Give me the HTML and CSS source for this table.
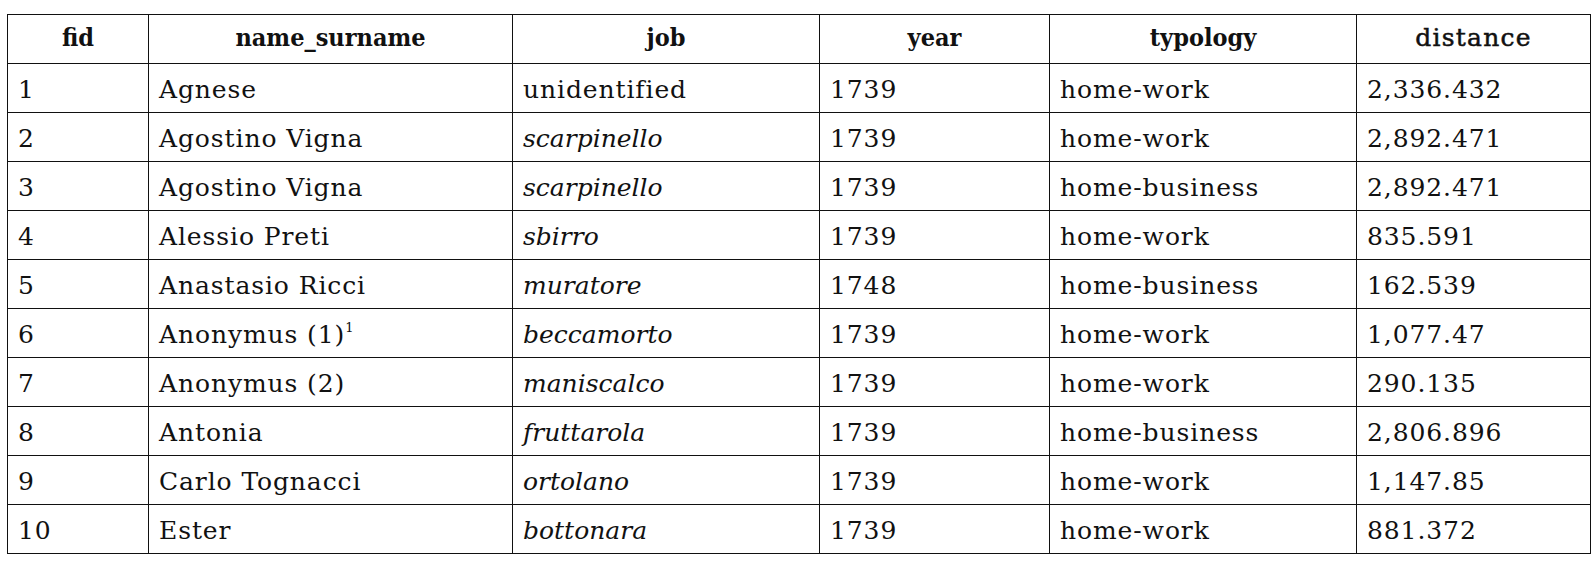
FILE: index.html
```html
<!DOCTYPE html>
<html>
<head>
<meta charset="utf-8">
<link rel="stylesheet" href="styles.css">
</head>
<body>
<table class="data">
  <colgroup>
    <col class="c-fid"><col class="c-name"><col class="c-job"><col class="c-year"><col class="c-typ"><col class="c-dist">
  </colgroup>
  <thead>
    <tr><th>fid</th><th>name_surname</th><th>job</th><th>year</th><th>typology</th><th class="light">distance</th></tr>
  </thead>
  <tbody>
    <tr><td>1</td><td>Agnese</td><td>unidentified</td><td>1739</td><td>home-work</td><td>2,336.432</td></tr>
    <tr><td>2</td><td>Agostino Vigna</td><td><em>scarpinello</em></td><td>1739</td><td>home-work</td><td>2,892.471</td></tr>
    <tr><td>3</td><td>Agostino Vigna</td><td><em>scarpinello</em></td><td>1739</td><td>home-business</td><td>2,892.471</td></tr>
    <tr><td>4</td><td>Alessio Preti</td><td><em>sbirro</em></td><td>1739</td><td>home-work</td><td>835.591</td></tr>
    <tr><td>5</td><td>Anastasio Ricci</td><td><em>muratore</em></td><td>1748</td><td>home-business</td><td>162.539</td></tr>
    <tr><td>6</td><td>Anonymus (1)<sup>1</sup></td><td><em>beccamorto</em></td><td>1739</td><td>home-work</td><td>1,077.47</td></tr>
    <tr><td>7</td><td>Anonymus (2)</td><td><em>maniscalco</em></td><td>1739</td><td>home-work</td><td>290.135</td></tr>
    <tr><td>8</td><td>Antonia</td><td><em>fruttarola</em></td><td>1739</td><td>home-business</td><td>2,806.896</td></tr>
    <tr><td>9</td><td>Carlo Tognacci</td><td><em>ortolano</em></td><td>1739</td><td>home-work</td><td>1,147.85</td></tr>
    <tr><td>10</td><td>Ester</td><td><em>bottonara</em></td><td>1739</td><td>home-work</td><td>881.372</td></tr>
  </tbody>
</table>
</body>
</html>
```

FILE: styles.css
```css
html, body {
  margin: 0;
  padding: 0;
  background: #ffffff;
}
body {
  padding: 14px 0 0 7px;
  font-family: "DejaVu Serif", "Liberation Serif", serif;
  color: #111111;
}
.data {
  border-collapse: collapse;
  table-layout: fixed;
  width: 1583px;
  font-size: 25px;
  letter-spacing: 0.9px;
}
.c-fid { width: 141px; }
.c-name { width: 364px; }
.c-job { width: 307px; }
.c-year { width: 230px; }
.c-typ { width: 307px; }
.c-dist { width: 234px; }
.data th, .data td {
  border: 1px solid #111111;
  height: 49px;
  padding: 0 10px;
  box-sizing: border-box;
  vertical-align: middle;
  white-space: nowrap;
  line-height: 1;
}
.data th {
  text-align: center;
  font-family: "DejaVu Serif Condensed", "DejaVu Serif", serif;
  font-weight: bold;
  letter-spacing: 0;
  padding-bottom: 4px;
}
.data th.light {
  font-family: "DejaVu Serif", serif;
  font-weight: normal;
  letter-spacing: 1.2px;
  -webkit-text-stroke: 0.5px #111111;
}
.data td {
  text-align: left;
  padding-top: 2px;
}
.data em {
  font-style: italic;
  letter-spacing: 0;
}
.data sup {
  font-size: 13px;
  vertical-align: 11px;
  line-height: 0;
}
```
